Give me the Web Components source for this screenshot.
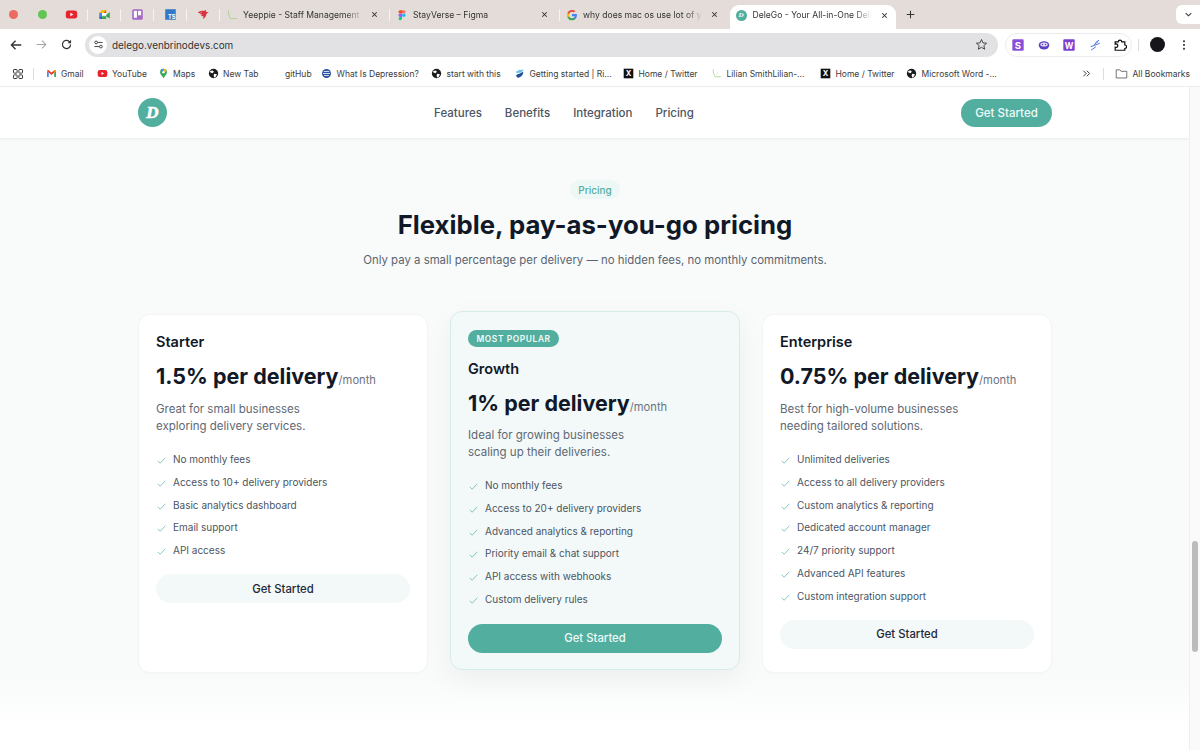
<!DOCTYPE html>
<html lang="en">
<head>
<meta charset="utf-8">
<title>DeleGo</title>
<style>
  html, body { margin: 0; height: 750px; overflow: hidden; background: #fff; font-family: Inter, "Noto Sans", sans-serif; }
  body { display: flex; flex-direction: column; }
</style>
</head>
<body>
<browser-tabs></browser-tabs>
<browser-toolbar></browser-toolbar>
<bookmark-bar></bookmark-bar>
<page-view>
  <site-nav></site-nav>
  <pricing-section>
    <price-card name="Starter" price="1.5% per delivery" desc="Great for small businesses<br>exploring delivery services."
      items="No monthly fees|Access to 10+ delivery providers|Basic analytics dashboard|Email support|API access"></price-card>
    <price-card popular name="Growth" price="1% per delivery" desc="Ideal for growing businesses<br>scaling up their deliveries."
      items="No monthly fees|Access to 20+ delivery providers|Advanced analytics &amp; reporting|Priority email &amp; chat support|API access with webhooks|Custom delivery rules"></price-card>
    <price-card name="Enterprise" price="0.75% per delivery" desc="Best for high-volume businesses<br>needing tailored solutions."
      items="Unlimited deliveries|Access to all delivery providers|Custom analytics &amp; reporting|Dedicated account manager|24/7 priority support|Advanced API features|Custom integration support"></price-card>
  </pricing-section>
</page-view>

<script>
// all the favicons and toolbar glyphs, viewBox 0 0 16 16
const LETTER = 'font-family="Inter, sans-serif" font-weight="700" text-anchor="middle" fill="#fff"';
const ICONS = {
  youtube: '<rect x="1" y="3" width="14" height="10" rx="3" fill="#e8232e"/><path d="M6.5 5.8v4.4L10.3 8z" fill="#fff"/>',
  meet: '<path d="M4.500 2.500H10V6H1.500z" fill="#fbbc04"/><path d="M1.500 6H5v4H1.500z" fill="#4285f4"/><path d="M1.500 10H5v3.500H3a1.500 1.500 0 0 1-1.500-1.500z" fill="#2a66c9"/><path d="M5 10h5V8.500L14.500 5v8L10 10.500v3H5z" fill="#34a853"/><path d="M5 6h5v3H5z" fill="#fff"/><path d="M10 2.500V6h-3z" fill="#ea4335"/>',
  trello: '<rect x="1.500" y="1.500" width="13" height="13" rx="2" fill="#a56ac8"/><rect x="3.500" y="3.500" width="3.800" height="8.500" fill="#fff"/><rect x="8.700" y="3.500" width="3.800" height="5.500" fill="#fff"/>',
  ts: `<rect x="1.500" y="1.500" width="13" height="13" fill="#3178c6"/><text x="9.500" y="13.300" font-size="7" ${LETTER}>TS</text>`,
  bird: '<path d="M1 6.200C2.500 4 5 3 7.500 3.500 9 3.800 10 3 11.500 2.500l-.6 2 3.600 1-2.800 1.700c-.2 2.800-1.800 4.800-4.300 6.300l.6-3.500-3.300-.2 1.800-1.800-3.800-.5 2-1.400z" fill="#d8323f"/><circle cx="5" cy="5.300" r=".6" fill="#fff"/>',
  leaf: '<path d="M3 2c.4 4 1 8 3 10.500M5.500 13.200c3-.5 6-.8 9-.4" fill="none" stroke="#a9cf8e" stroke-width="1.200"/><path d="M7.800 9.500c.5-1 1-2 2.200-3.500" fill="none" stroke="#cfe3bf" stroke-width="1"/>',
  figma: '<path d="M5.500 1.500H8V6H5.500a2.250 2.250 0 0 1 0-4.500z" fill="#f24e1e"/><path d="M8 1.500h2.500a2.250 2.250 0 0 1 0 4.500H8z" fill="#ff7262"/><path d="M5.500 6H8v4.500H5.500a2.250 2.250 0 0 1 0-4.500z" fill="#a259ff"/><circle cx="10.400" cy="8.250" r="2.250" fill="#1abcfe"/><path d="M5.500 10.500H8v2.250a2.250 2.250 0 1 1-2.500-2.250z" fill="#0acf83"/>',
  google: '<path d="M14.500 8.200c0-.5 0-1-.1-1.400H8v2.700h3.700a3.200 3.200 0 0 1-1.400 2.100v1.700h2.200c1.300-1.200 2-3 2-5.100z" fill="#4285f4"/><path d="M8 15c1.900 0 3.400-.6 4.500-1.700l-2.200-1.700c-.6.400-1.400.7-2.300.7-1.800 0-3.300-1.200-3.800-2.800H1.900v1.700A7 7 0 0 0 8 15z" fill="#34a853"/><path d="M4.200 9.500a4 4 0 0 1 0-2.900V4.900H1.900a7 7 0 0 0 0 6.300z" fill="#fbbc04"/><path d="M8 3.800c1 0 1.900.3 2.600 1l1.900-2A7 7 0 0 0 1.900 4.900l2.300 1.700C4.700 5 6.200 3.800 8 3.800z" fill="#ea4335"/>',
  back: '<path d="M14 8H2.800M7.500 3.200 2.700 8l4.800 4.800" fill="none" stroke="currentColor" stroke-width="1.500"/>',
  forward: '<path d="M2 8h11.200M8.500 3.200 13.300 8l-4.800 4.800" fill="none" stroke="currentColor" stroke-width="1.300"/>',
  reload: '<path d="M13 8a5 5 0 1 1-1.500-3.600L13 6" fill="none" stroke="currentColor" stroke-width="1.500"/><path d="M13.600 2.200v4.300H9.300z" fill="currentColor"/>',
  tune: '<g fill="none" stroke="#333" stroke-width="1.300"><circle cx="4.500" cy="5" r="2"/><path d="M6.500 5H14M2 11h7.500"/><circle cx="11.500" cy="11" r="2"/></g>',
  star: '<path d="M8 1.800 9.800 6l4.500.4-3.400 3 1 4.400L8 11.500l-3.900 2.300 1-4.400-3.400-3L6.200 6z" fill="none" stroke="#444" stroke-width="1.200"/>',
  s: `<rect x="1.500" y="1.500" width="13" height="13" rx="1.500" fill="#8a4fd8"/><text x="8" y="12.300" font-size="11" ${LETTER}>S</text>`,
  mask: '<ellipse cx="8" cy="8.300" rx="6" ry="4.700" fill="#5d3fc4"/><ellipse cx="8" cy="7.300" rx="4.200" ry="2.300" fill="#e4dcfa"/><circle cx="6.300" cy="7.500" r=".8" fill="#5d3fc4"/><circle cx="9.700" cy="7.500" r=".8" fill="#5d3fc4"/>',
  w: `<rect x="1.500" y="1.500" width="13" height="13" rx="1" fill="#7c3fd0"/><text x="8" y="12" font-size="9.500" ${LETTER}>W</text>`,
  streak: '<path d="M12.500 2.500 8.500 5.500M13.500 6 3 10M9 10l-5.500 4M12 3.500 6.500 8" fill="none" stroke="#4e72d8" stroke-width="1.100"/>',
  puzzle: '<path d="M2.500 4.500H6a2 2 0 1 1 4 0h3.500V8a2 2 0 1 1 0 4v2H2.500v-3.500a2 2 0 1 0 0-3.500z" fill="none" stroke="#111" stroke-width="1.400"/>',
  dots: '<circle cx="8" cy="3" r="1.400" fill="#333"/><circle cx="8" cy="8" r="1.400" fill="#333"/><circle cx="8" cy="13" r="1.400" fill="#333"/>',
  apps: '<g fill="none" stroke="#333" stroke-width="1.300"><rect x="2" y="2" width="4.800" height="4.800" rx=".8"/><rect x="9.200" y="2" width="4.800" height="4.800" rx=".8"/><rect x="2" y="9.200" width="4.800" height="4.800" rx=".8"/><rect x="9.200" y="9.200" width="4.800" height="4.800" rx=".8"/></g>',
  gmail: '<path d="M1.500 4v9h2.500V7z" fill="#4285f4"/><path d="M12 7v6h2.500V4z" fill="#34a853"/><path d="M1.500 4c0-1 1.200-1.500 2-1L8 6.500 12.500 3c.8-.5 2 0 2 1L12 7 8 10 4 7z" fill="#ea4335"/><path d="M12 3.200 14.500 4 12 7z" fill="#fbbc04"/>',
  maps: '<path d="M8 1a5 5 0 0 0-5 5c0 3.500 3.500 5.500 5 9 1.500-3.500 5-5.500 5-9a5 5 0 0 0-5-5z" fill="#34a853"/><path d="M4.200 2.800A5 5 0 0 1 8 1v3.500L5.500 7z" fill="#4285f4"/><path d="M8 1a5 5 0 0 1 4.500 3L9.500 6.500 8 4z" fill="#fbbc04"/><circle cx="8" cy="6" r="1.800" fill="#fff"/>',
  globe: '<circle cx="8" cy="8" r="6.800" fill="#1c1c1c"/><path d="M3 4.500 7 3.500l1.500 2-2 2-3-1zM9 8.500l4 .5-1.500 3.500-2.500 1.500-.8-3z" fill="#fff"/>',
  wave: '<circle cx="8" cy="8" r="6.500" fill="#2b4ea0"/><path d="M4 5h8M3 8h10M4.500 11h7" stroke="#fff" stroke-width="1.200"/>',
  rive: '<path d="M2 6c3-3 8-4 12-4-1 2-2 3.500-4 4.500C7 7.500 4 7.500 2 6z" fill="#6fc0ec"/><path d="M3 10c3-1 6-2 10.500-4.500C13.500 10 10 14 6 14c-1.500 0-2.500-2-3-4z" fill="#1e4f97"/>',
  x: `<rect x="1" y="1" width="14" height="14" fill="#111"/><text x="8" y="12.200" font-size="11" ${LETTER}>X</text>`,
  more: '<path d="M3.500 4 7.500 8l-4 4M8.500 4l4 4-4 4" fill="none" stroke="#333" stroke-width="1.400"/>',
  folder: '<path d="M1.500 3.500h4.500l1.500 1.800h7v8.200h-13z" fill="none" stroke="#555" stroke-width="1"/>',
  chevron: '<path d="M4 6l4 4 4-4" fill="none" stroke="#333" stroke-width="1.500"/>',
  close: '<path d="M4 4l8 8M12 4l-8 8" stroke="#333" stroke-width="1.800"/>',
  plus: '<path d="M8 2.500v11M2.500 8h11" stroke="#333" stroke-width="1.500"/>',
  check: '<path d="M2.500 8.500 6 12l7.500-8" fill="none" stroke="#52ae9f" stroke-width="1"/>'
};

class UiIcon extends HTMLElement {
  connectedCallback() {
    const size = this.getAttribute("size") || 14;
    this.attachShadow({ mode: "open" }).innerHTML = `
      <style>:host { display: inline-flex; flex: none; } svg { display: block; }</style>
      <svg width="${size}" height="${size}" viewBox="0 0 16 16">${ICONS[this.getAttribute("name")]}</svg>`;
  }
}
customElements.define("ui-icon", UiIcon);

// round D, used by the active tab and the site logo
class DeleMark extends HTMLElement {
  connectedCallback() {
    const size = Number(this.getAttribute("size") || 11);
    this.attachShadow({ mode: "open" }).innerHTML = `
      <style>
        :host { display: inline-flex; flex: none; width: ${size}px; height: ${size}px; border-radius: 50%; background: #52ae9f;
          align-items: center; justify-content: center; color: #fff; font: italic 800 ${Math.round(size * 0.6)}px/1 "Liberation Serif", serif; -webkit-text-stroke: ${size > 20 ? 0.6 : 0}px #fff; }
      </style>D`;
  }
}
customElements.define("dele-mark", DeleMark);

class BrowserTabs extends HTMLElement {
  constructor() {
    super();
    const pinned = ["youtube", "meet", "trello", "ts", "bird"];
    const tabs = [
      ["leaf", "Yeeppie - Staff Management"],
      ["figma", "StayVerse – Figma"],
      ["google", "why does mac os use lot of y"]
    ];
    this.attachShadow({ mode: "open" }).innerHTML = `
      <style>
        :host { display: flex; flex: none; height: 29px; background: #e3dcd8; align-items: center; padding-left: 9px; font: 400 8.6px Inter, sans-serif; color: #333; }
        .light { width: 9px; height: 9px; border-radius: 50%; background: #ec6a5e; }
        .light.g { background: #61c554; margin-left: 20px; margin-right: 7.500px; }
        .pin { width: 33px; height: 29px; display: flex; align-items: center; justify-content: center; position: relative; }
        .pin::after, .tab::after { content: ""; position: absolute; right: 0; top: 9px; height: 12px; width: 1px; background: #f6f3f1; }
        .tab { width: 170px; height: 29px; display: flex; align-items: center; padding: 0 11px 0 6.500px; box-sizing: border-box; gap: 5px; position: relative; }
        .tab .title { flex: 1; white-space: nowrap; overflow: hidden; -webkit-mask-image: linear-gradient(90deg, #000 84%, transparent 98%); }
        .active { width: 166px; height: 24px; margin-top: 5px; background: #fff; border-radius: 9px 9px 0 0; padding: 0 7px 4px 6px; gap: 6px; }
        .active::after, .tab.none::after { display: none; }
        .plus { margin-left: 9px; }
        .down { margin-left: auto; width: 24px; height: 19px; background: #fff; border-radius: 6px 0 0 6px; display: flex; align-items: center; justify-content: center; }
      </style>
      <span class="light"></span><span class="light g"></span>
      ${pinned.map(n => `<div class="pin"><ui-icon name="${n}" size="13"></ui-icon></div>`).join("")}
      ${tabs.map((t, i) => `<div class="tab${i == 2 ? " none" : ""}"><ui-icon name="${t[0]}" size="12"></ui-icon><span class="title">${t[1]}</span><ui-icon name="close" size="9"></ui-icon></div>`).join("")}
      <div class="tab active"><dele-mark></dele-mark><span class="title">DeleGo - Your All-in-One Deli</span><ui-icon name="close" size="9"></ui-icon></div>
      <ui-icon class="plus" name="plus" size="11"></ui-icon>
      <div class="down"><ui-icon name="chevron" size="11"></ui-icon></div>`;
  }
}
customElements.define("browser-tabs", BrowserTabs);

class BrowserToolbar extends HTMLElement {
  constructor() {
    super();
    this.attachShadow({ mode: "open" }).innerHTML = `
      <style>
        :host { display: flex; flex: none; height: 31px; background: #fff; align-items: center; padding: 0 10px 0 9px; box-sizing: border-box; color: #333; font: 400 9.900px Inter, sans-serif; }
        .nav { display: flex; align-items: center; gap: 12px; margin-right: 12px; }
        .fwd { color: #a5a5a5; }
        .omni { flex: 1; height: 24px; background: #e2e2e4; border-radius: 12px; display: flex; align-items: center; padding: 0 10px 0 4px; gap: 5px; }
        .site { width: 18px; height: 18px; border-radius: 50%; background: #fff; display: flex; align-items: center; justify-content: center; }
        .url { flex: 1; }
        .ext { width: 127px; height: 24px; margin-left: 7px; box-sizing: border-box; border: 1px solid #ececec; border-radius: 12px; display: flex; align-items: center; justify-content: space-between; padding: 0 4px 0 5px; }
        .sep { width: 1px; height: 12px; background: #ddd; margin: 0 11px 0 6px; }
        .avatar { width: 15px; height: 15px; border-radius: 50%; background: #15151a; margin-right: 13px; }
      </style>
      <div class="nav">
        <ui-icon name="back" size="14"></ui-icon>
        <ui-icon class="fwd" name="forward" size="13"></ui-icon>
        <ui-icon name="reload" size="13"></ui-icon>
      </div>
      <div class="omni">
        <div class="site"><ui-icon name="tune" size="11"></ui-icon></div>
        <span class="url">delego.venbrinodevs.com</span>
        <ui-icon name="star" size="13"></ui-icon>
      </div>
      <div class="ext">
        <ui-icon name="s" size="14"></ui-icon>
        <ui-icon name="mask" size="14"></ui-icon>
        <ui-icon name="w" size="14"></ui-icon>
        <ui-icon name="streak" size="14"></ui-icon>
        <ui-icon name="puzzle" size="14"></ui-icon>
      </div>
      <div class="sep"></div>
      <div class="avatar"></div>
      <ui-icon name="dots" size="12"></ui-icon>`;
  }
}
customElements.define("browser-toolbar", BrowserToolbar);

class BookmarkBar extends HTMLElement {
  constructor() {
    super();
    // icon, label, width of the slot in the bar
    const marks = [
      ["gmail", "Gmail", 51], ["youtube", "YouTube", 61], ["maps", "Maps", 50], ["globe", "New Tab", 77.500],
      ["", "gitHub", 36], ["wave", "What Is Depression?", 110], ["globe", "start with this", 83],
      ["rive", "Getting started | Ri...", 109], ["x", "Home / Twitter", 88], ["leaf", "Lilian SmithLilian-...", 109],
      ["x", "Home / Twitter", 86], ["globe", "Microsoft Word -...", 100]
    ];
    this.attachShadow({ mode: "open" }).innerHTML = `
      <style>
        :host { display: flex; flex: none; height: 27px; background: #fff; align-items: center; padding: 1px 0 0 12px; box-sizing: border-box; color: #3c3c3c; font: 400 8.500px Inter, sans-serif; border-bottom: 1px solid #ececec; }
        .sep { width: 1px; height: 12px; background: #ddd; margin: 0 11.500px 0 9px; }
        .mark { display: flex; flex: none; align-items: center; gap: 4.500px; white-space: nowrap; }
        .list { display: flex; align-items: center; flex: 1; }
        .right { display: flex; align-items: center; margin-right: 10px; }
      </style>
      <ui-icon name="apps" size="12"></ui-icon>
      <div class="sep"></div>
      <div class="list">
        ${marks.map(m => `<div class="mark" style="width:${m[2]}px">${m[0] ? `<ui-icon name="${m[0]}" size="11"></ui-icon>` : ""}<span>${m[1]}</span></div>`).join("")}
      </div>
      <div class="right">
        <ui-icon name="more" size="11"></ui-icon>
        <div class="sep" style="margin:0 11px"></div>
        <ui-icon name="folder" size="13"></ui-icon>
        <span style="margin-left:5px">All Bookmarks</span>
      </div>`;
  }
}
customElements.define("bookmark-bar", BookmarkBar);

class PageView extends HTMLElement {
  constructor() {
    super();
    this.attachShadow({ mode: "open" }).innerHTML = `
      <style>
        :host { display: flex; flex: 1; min-height: 0; }
        .main { flex: 1; min-width: 0; display: flex; flex-direction: column; }
        .track { width: 11px; flex: none; background: #fafafa; border-left: 1px solid #efefef; box-sizing: border-box; padding-top: 454px; display: flex; justify-content: center; }
        .thumb { width: 6px; height: 111px; border-radius: 3px; background: #bcbcbc; }
      </style>
      <div class="main"><slot></slot></div>
      <div class="track"><div class="thumb"></div></div>`;
  }
}
customElements.define("page-view", PageView);

class SiteNav extends HTMLElement {
  constructor() {
    super();
    this.attachShadow({ mode: "open" }).innerHTML = `
      <style>
        :host { display: flex; flex: none; height: 52px; box-sizing: border-box; background: #fff; border-bottom: 1px solid #f0f0f0; padding: 0 137px 0 138px; align-items: center; justify-content: space-between; font-family: Inter, sans-serif; box-shadow: 0 1px 2px rgba(0,0,0,.03); position: relative; }
        nav { display: flex; gap: 23px; font-size: 11.500px; font-weight: 500; color: #4b5563; }
        .cta { width: 91px; height: 28px; border-radius: 14px; background: #52ae9f; color: #eefaf7; font-size: 11.500px; font-weight: 500; display: flex; align-items: center; justify-content: center; }
      </style>
      <dele-mark size="29"></dele-mark>
      <nav><span>Features</span><span>Benefits</span><span>Integration</span><span>Pricing</span></nav>
      <div class="cta">Get Started</div>`;
  }
}
customElements.define("site-nav", SiteNav);

class PricingSection extends HTMLElement {
  constructor() {
    super();
    this.attachShadow({ mode: "open" }).innerHTML = `
      <style>
        :host { display: flex; flex: 1; flex-direction: column; align-items: center; background: linear-gradient(180deg, #f8fbfa 0, #f9fbfb 540px, #fff 590px); padding: 41px 137px 0 138px; font-family: Inter, sans-serif; }
        .tag { height: 19px; padding: 0 8.500px; border-radius: 10px; background: #edf7f5; color: #52ae9f; font-size: 10px; font-weight: 500; display: flex; align-items: center; }
        h2 { margin: 8px 0 0; font-size: 25.750px; line-height: 36px; font-weight: 700; color: #111827; }
        p { margin: 8px 0 0; font-size: 11.400px; line-height: 18px; color: #5b6470; }
        .grid { align-self: stretch; margin-top: 45px; display: grid; grid-template-columns: repeat(3, 1fr); gap: 22px; }
      </style>
      <div class="tag">Pricing</div>
      <h2>Flexible, pay-as-you-go pricing</h2>
      <p>Only pay a small percentage per delivery — no hidden fees, no monthly commitments.</p>
      <div class="grid"><slot></slot></div>`;
  }
}
customElements.define("pricing-section", PricingSection);

class PriceCard extends HTMLElement {
  connectedCallback() {
    const popular = this.hasAttribute("popular");
    const items = this.getAttribute("items").split("|");
    this.attachShadow({ mode: "open" }).innerHTML = `
      <style>
        :host { display: block; height: 359px; box-sizing: border-box; padding: 17px; border: 1px solid #f3f5f5; border-radius: 12px; background: #fff; box-shadow: 0 1px 3px rgba(0,0,0,.02); font-family: Inter, sans-serif; }
        :host([popular]) { background: #f3f9f9; border-color: #d6ece8; transform: translateY(-3px); box-shadow: 0 10px 30px rgba(0,0,0,.05); }
        .badge { display: inline-flex; height: 17px; align-items: center; padding: 0 8.500px; border-radius: 9px; background: #52ae9f; color: #f4fbfa; font-size: 8.400px; font-weight: 600; letter-spacing: .6px; margin: 1px 0 12px; vertical-align: top; }
        .name { font-size: 14.500px; line-height: 20px; font-weight: 600; color: #111827; }
        .price { margin-top: 9px; font-size: 21.500px; line-height: 30px; font-weight: 700; color: #111827; white-space: nowrap; }
        .price small { font-size: 11.200px; font-weight: 400; color: #6b7280; }
        .desc { margin-top: 6px; font-size: 11.500px; line-height: 17px; color: #5f6873; }
        :host([popular]) .desc { margin-top: 5px; }
        ul { list-style: none; margin: 17px 0 0; padding: 0; display: flex; flex-direction: column; gap: 7.800px; }
        li { display: flex; align-items: center; gap: 6px; font-size: 10px; line-height: 15px; color: #4b5563; }
        ui-icon { margin-top: 2px; }
        .btn { margin-top: 16px; height: 29px; border-radius: 15px; background: #f3f9f8; color: #1f2937; font-size: 11.300px; font-weight: 500; display: flex; align-items: center; justify-content: center; }
        :host([popular]) .btn { margin-top: 17px; background: #52ae9f; color: #eefaf7; }
      </style>
      ${popular ? `<div class="badge">MOST POPULAR</div>` : ""}
      <div class="name">${this.getAttribute("name")}</div>
      <div class="price">${this.getAttribute("price")}<small>/month</small></div>
      <div class="desc">${this.getAttribute("desc")}</div>
      <ul>${items.map(t => `<li><ui-icon name="check" size="11"></ui-icon>${t.replace(/&/g, "&amp;")}</li>`).join("")}</ul>
      <div class="btn">Get Started</div>`;
  }
}
customElements.define("price-card", PriceCard);
</script>
</body>
</html>
